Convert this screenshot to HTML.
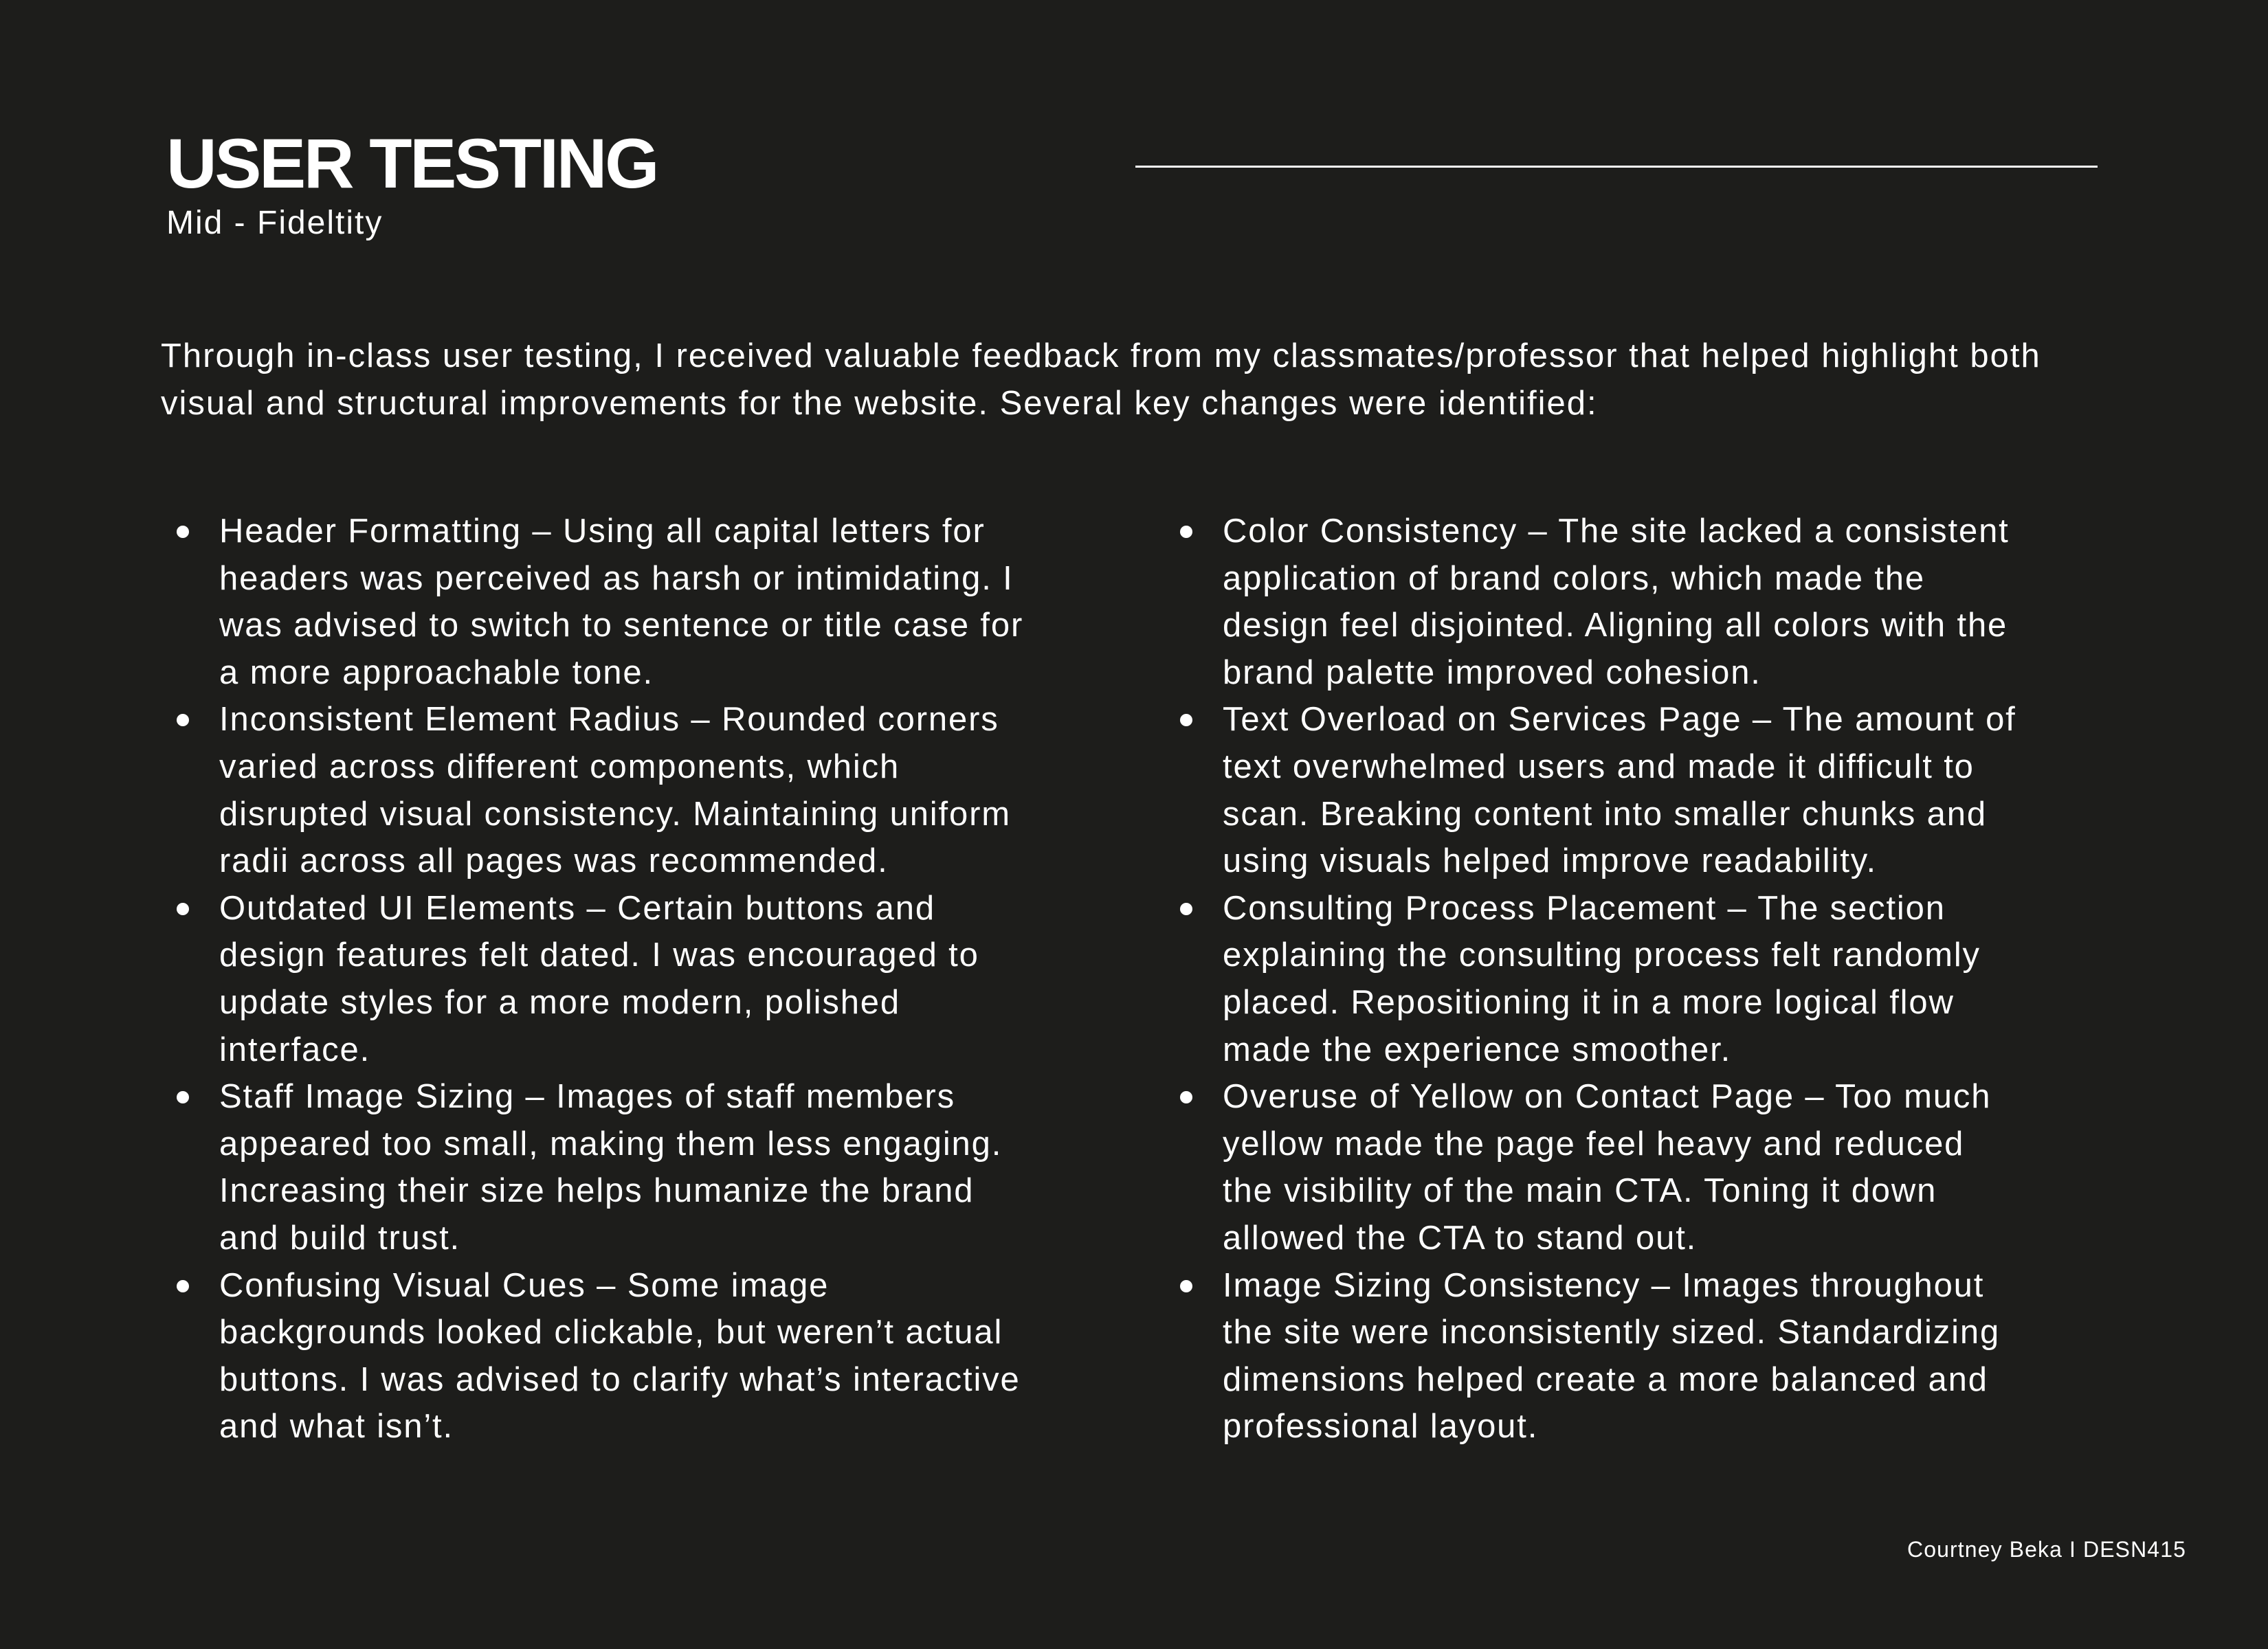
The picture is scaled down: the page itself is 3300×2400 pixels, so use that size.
<!DOCTYPE html>
<html><head><meta charset="utf-8"><style>
html,body{margin:0;padding:0}
body{width:3300px;height:2400px;background:#1d1d1b;position:relative;overflow:hidden;font-family:"Liberation Sans",Arial,sans-serif;color:#fff}
.a{position:absolute;white-space:nowrap}
h1{position:absolute;left:242px;top:187px;margin:0;font-size:102px;line-height:1;font-weight:700;letter-spacing:-3.3px}
.sub{left:242px;top:301px;font-size:48px;line-height:1;letter-spacing:2px}
.rule{position:absolute;left:1652px;top:241px;width:1400px;height:3px;background:#fff}
.p{left:234px;top:484px;font-size:49px;line-height:69px;letter-spacing:2px}
.col{position:absolute;top:739px;font-size:49px;line-height:68.6px;white-space:nowrap;letter-spacing:1.85px}
.it{position:relative}
.it:before{content:"";position:absolute;left:-62px;top:26px;width:18px;height:18px;border-radius:50%;background:#fff}
.f{left:2670px;width:511px;text-align:right;top:2239px;font-size:32px;line-height:1;letter-spacing:1.1px}
</style></head><body>
<h1>USER TESTING</h1>
<div class="a sub">Mid - Fideltity</div>
<div class="rule"></div>
<div class="a p">Through in-class user testing, I received valuable feedback from my classmates/professor that helped highlight both<br>visual and structural improvements for the website. Several key changes were identified:</div>
<div class="col" style="left:319px">
<div class="it">Header Formatting – Using all capital letters for<br>headers was perceived as harsh or intimidating. I<br>was advised to switch to sentence or title case for<br>a more approachable tone.</div>
<div class="it">Inconsistent Element Radius – Rounded corners<br>varied across different components, which<br>disrupted visual consistency. Maintaining uniform<br>radii across all pages was recommended.</div>
<div class="it">Outdated UI Elements – Certain buttons and<br>design features felt dated. I was encouraged to<br>update styles for a more modern, polished<br>interface.</div>
<div class="it">Staff Image Sizing – Images of staff members<br>appeared too small, making them less engaging.<br>Increasing their size helps humanize the brand<br>and build trust.</div>
<div class="it">Confusing Visual Cues – Some image<br>backgrounds looked clickable, but weren’t actual<br>buttons. I was advised to clarify what’s interactive<br>and what isn’t.</div>
</div>
<div class="col" style="left:1779px">
<div class="it">Color Consistency – The site lacked a consistent<br>application of brand colors, which made the<br>design feel disjointed. Aligning all colors with the<br>brand palette improved cohesion.</div>
<div class="it">Text Overload on Services Page – The amount of<br>text overwhelmed users and made it difficult to<br>scan. Breaking content into smaller chunks and<br>using visuals helped improve readability.</div>
<div class="it">Consulting Process Placement – The section<br>explaining the consulting process felt randomly<br>placed. Repositioning it in a more logical flow<br>made the experience smoother.</div>
<div class="it">Overuse of Yellow on Contact Page – Too much<br>yellow made the page feel heavy and reduced<br>the visibility of the main CTA. Toning it down<br>allowed the CTA to stand out.</div>
<div class="it">Image Sizing Consistency – Images throughout<br>the site were inconsistently sized. Standardizing<br>dimensions helped create a more balanced and<br>professional layout.</div>
</div>
<div class="a f">Courtney Beka I DESN415</div>
</body></html>
